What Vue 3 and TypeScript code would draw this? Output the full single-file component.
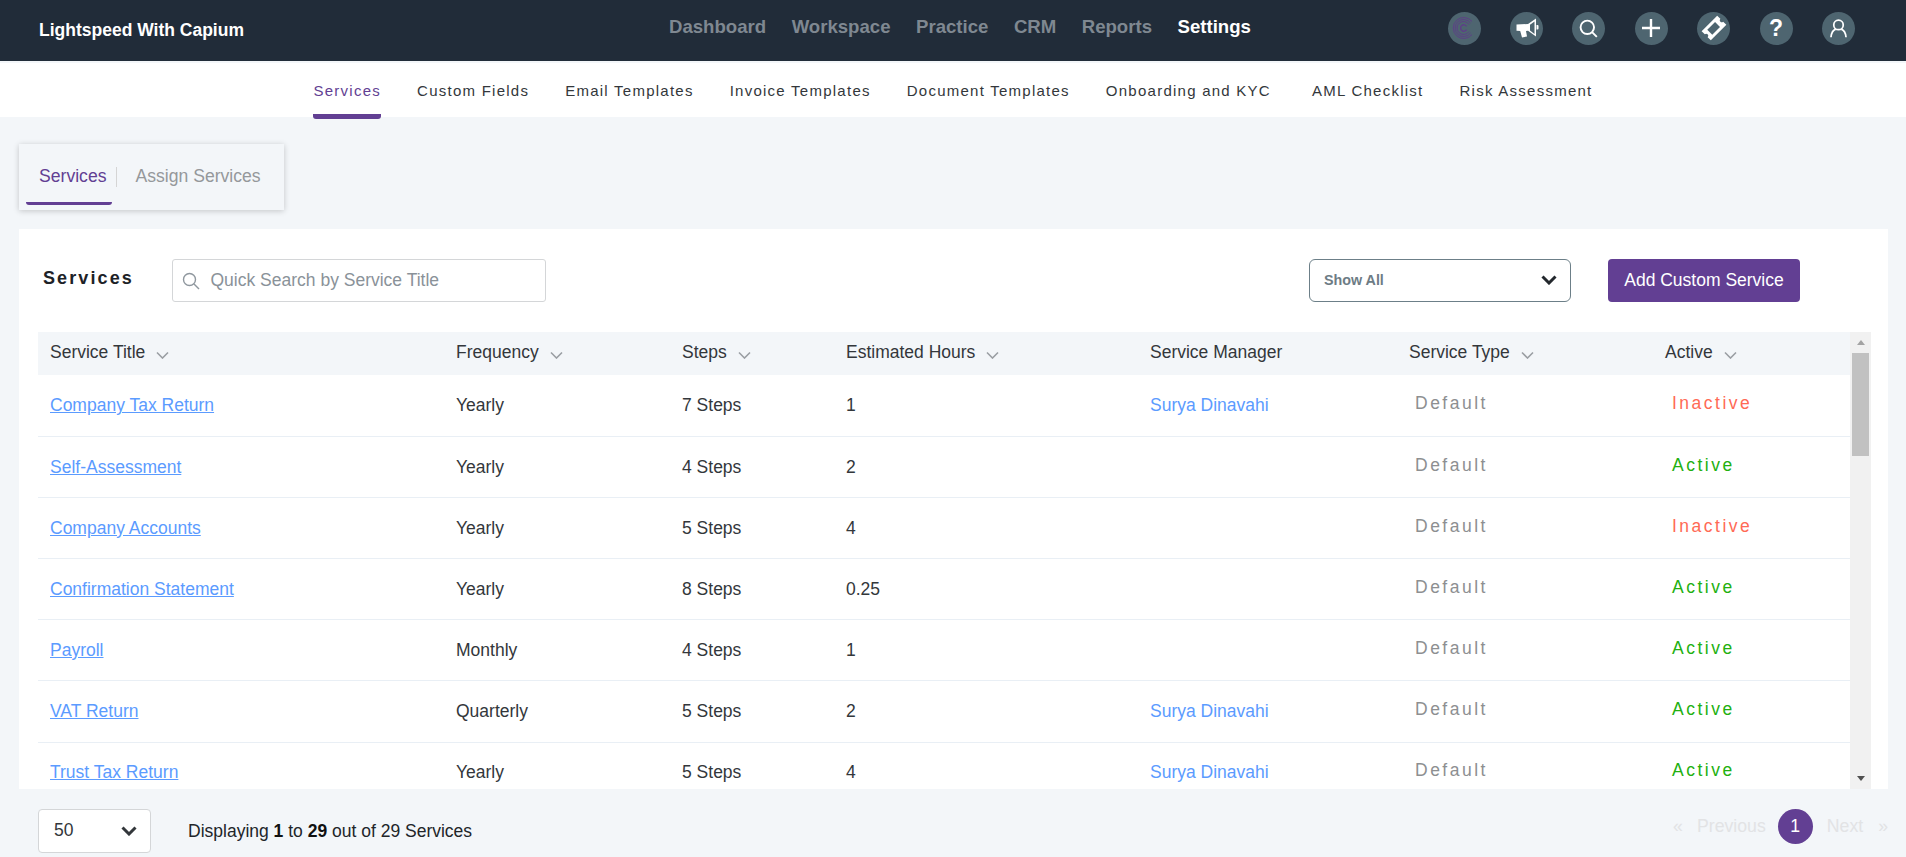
<script setup lang="ts">
interface Row { title: string; freq: string; steps: string; hours: string; manager: string; active: boolean }
const mainNav: string[] = ['Dashboard', 'Workspace', 'Practice', 'CRM', 'Reports', 'Settings']
const subNav: string[] = ['Services', 'Custom Fields', 'Email Templates', 'Invoice Templates', 'Document Templates', 'Onboarding and KYC', 'AML Checklist', 'Risk Assessment']
const cols: { label: string; sort: boolean }[] = [
  { label: 'Service Title', sort: true },
  { label: 'Frequency', sort: true },
  { label: 'Steps', sort: true },
  { label: 'Estimated Hours', sort: true },
  { label: 'Service Manager', sort: false },
  { label: 'Service Type', sort: true },
  { label: 'Active', sort: true },
]
const widths: number[] = [406, 226, 164, 304, 259, 256, 197]
const sd = 'Surya Dinavahi'
const rows: Row[] = [
  { title: 'Company Tax Return', freq: 'Yearly', steps: '7 Steps', hours: '1', manager: sd, active: false },
  { title: 'Self-Assessment', freq: 'Yearly', steps: '4 Steps', hours: '2', manager: '', active: true },
  { title: 'Company Accounts', freq: 'Yearly', steps: '5 Steps', hours: '4', manager: '', active: false },
  { title: 'Confirmation Statement', freq: 'Yearly', steps: '8 Steps', hours: '0.25', manager: '', active: true },
  { title: 'Payroll', freq: 'Monthly', steps: '4 Steps', hours: '1', manager: '', active: true },
  { title: 'VAT Return', freq: 'Quarterly', steps: '5 Steps', hours: '2', manager: sd, active: true },
  { title: 'Trust Tax Return', freq: 'Yearly', steps: '5 Steps', hours: '4', manager: sd, active: true },
]
</script>

<template>
  <div class="page">
    <header class="top">
      <div class="brand">Lightspeed With Capium</div>
      <nav class="main-nav">
        <a v-for="n in mainNav" :key="n" :class="{ on: n === 'Settings' }">{{ n }}</a>
      </nav>
      <div class="icons">
        <span class="ic">
          <svg width="24" height="24" viewBox="0 0 24 24" fill="none" stroke="#5d3f87" stroke-width="1">
            <path d="M20 5.500A10.500 10.500 0 1 0 20 18.500" />
            <path d="M18.500 7A8.500 8.500 0 1 0 18.500 17" />
            <path d="M17 8.500A6.500 6.500 0 1 0 17 15.500" />
            <path d="M14.600 10.400A3.200 3.200 0 1 0 14.600 13.600" stroke-width="1.400" />
          </svg>
        </span>
        <span class="ic">
          <svg width="24" height="24" viewBox="0 0 24 24" fill="#fff">
            <path d="M1.500 8.500L13 8 21 2.500v18L13 14.800l-2 .3 1 5.400-5 1-1.800-6.500-3.700-.3z" />
            <path d="M21.500 9h1a1 1 0 0 1 1 1v2.500a1 1 0 0 1-1 1h-1z" />
            <path d="M15 8.800l4.500-3.200v12.300L15 14.400z" fill="#4e6570" />
          </svg>
        </span>
        <span class="ic">
          <svg width="19" height="19" viewBox="0 0 24 24" fill="none" stroke="#fff" stroke-width="2.400">
            <circle cx="10.500" cy="10.500" r="8.500" />
            <path d="M16.500 16.500l6 6" />
          </svg>
        </span>
        <span class="ic">
          <svg width="24" height="24" viewBox="0 0 24 24" stroke="#fff" stroke-width="2.400">
            <path d="M12 3v18M3 12h18" />
          </svg>
        </span>
        <span class="ic">
          <svg width="26" height="26" viewBox="0 0 26 26">
            <g transform="rotate(-45 13 13)">
              <path fill="#fff" d="M2 6.500h22v4.500a2 2 0 0 0 0 4v4.500H2V15a2 2 0 0 0 0-4z" />
              <rect x="7" y="9.500" width="11" height="7" fill="#4e6570" />
            </g>
          </svg>
        </span>
        <span class="ic qm">?</span>
        <span class="ic">
          <svg width="19" height="19" viewBox="0 0 24 24" fill="none" stroke="#fff" stroke-width="2.200">
            <circle cx="12" cy="7.500" r="6" />
            <path d="M2.500 23c.5-5.500 3-9.300 6-10.300M21.500 23c-.5-5.500-3-9.300-6-10.300" />
          </svg>
        </span>
      </div>
    </header>

    <nav class="sub-nav">
      <a v-for="s in subNav" :key="s" :class="{ on: s === 'Services', aml: s === 'AML Checklist' }">{{ s }}</a>
    </nav>

    <main class="content">
      <div class="tabs">
        <a class="tab on">Services</a>
        <a class="tab">Assign Services</a>
      </div>

      <section class="card">
        <div class="toolbar">
          <h2>Services</h2>
          <div class="search">
            <svg width="18" height="18" viewBox="0 0 18 18" fill="none" stroke="#8f979e" stroke-width="1.400">
              <circle cx="7.500" cy="7.500" r="6" />
              <path d="M12 12l5 5" />
            </svg>
            <span>Quick Search by Service Title</span>
          </div>
          <div class="filter">
            <span>Show All</span>
            <svg width="16" height="10" viewBox="0 0 16 10" fill="none" stroke="#23282d" stroke-width="3">
              <path d="M1.500 1.500L8 8l6.500-6.500" />
            </svg>
          </div>
          <button class="add">Add Custom Service</button>
        </div>

        <div class="table-wrap">
          <div class="table-clip">
            <table>
              <colgroup>
                <col v-for="(w, i) in widths" :key="i" :style="{ width: w + 'px' }" />
              </colgroup>
              <thead>
                <tr>
                  <th v-for="c in cols" :key="c.label">
                    <span class="th-in">{{ c.label }}
                      <svg v-if="c.sort" class="sort" width="13" height="8" viewBox="0 0 13 8" fill="none" stroke="#9a9ea3" stroke-width="1.600">
                        <path d="M1 1.500l5.500 5.500L12 1.500" />
                      </svg>
                    </span>
                  </th>
                </tr>
              </thead>
              <tbody>
                <tr v-for="r in rows" :key="r.title">
                  <td><a class="link">{{ r.title }}</a></td>
                  <td>{{ r.freq }}</td>
                  <td>{{ r.steps }}</td>
                  <td>{{ r.hours }}</td>
                  <td class="mgr">{{ r.manager }}</td>
                  <td><span class="type">Default</span></td>
                  <td><span class="status" :class="r.active ? 'yes' : 'no'">{{ r.active ? 'Active' : 'Inactive' }}</span></td>
                </tr>
              </tbody>
            </table>
          </div>
          <div class="bar">
            <i class="arrow up"></i>
            <div class="thumb"></div>
            <i class="arrow down"></i>
          </div>
        </div>
      </section>

      <footer class="foot">
        <div class="size">
          <span>50</span>
          <svg width="16" height="10" viewBox="0 0 16 10" fill="none" stroke="#33373b" stroke-width="3">
            <path d="M1.500 1.500L8 8l6.500-6.500" />
          </svg>
        </div>
        <div class="count">Displaying <b>1</b> to <b>29</b> out of 29 Services</div>
        <div class="pager">
          <span class="q">«</span>
          <span class="prev">Previous</span>
          <span class="num">1</span>
          <span class="next">Next</span>
          <span class="q">»</span>
        </div>
      </footer>
    </main>
  </div>
</template>

<style>
html, body { margin: 0; height: 100%; overflow: hidden; background: #f3f6f9; }
</style>

<style scoped>
.page { font-family: "Liberation Sans", Arial, sans-serif; color: #33373b; height: 857px; overflow: hidden; }

.top { height: 61px; background: #212c39; display: flex; align-items: center; }
.brand { width: 630px; padding-left: 39px; color: #fff; font-weight: 700; font-size: 17.500px; margin-top: -1px; flex: none; }
.main-nav { display: flex; gap: 25.500px; font-size: 18.600px; font-weight: 700; color: #7f8891; margin-top: -8px; }
.main-nav .on { color: #fff; }
.icons { margin-left: auto; padding-right: 51px; display: flex; gap: 29.400px; margin-top: -5px; }
.ic { width: 33px; height: 33px; border-radius: 50%; background: #4e6570; display: flex; align-items: center; justify-content: center; }
.qm { color: #fff; font-weight: 700; font-size: 23px; }

.sub-nav { margin-top: 2px; height: 54px; background: #fff; display: flex; justify-content: center; gap: 36px; font-size: 15px; letter-spacing: 1.250px; color: #33373b; align-items: center; }
.sub-nav a { position: relative; }
.sub-nav .on { color: #623f93; }
.sub-nav .on::after { content: ""; position: absolute; left: -1px; right: 0; top: 32.500px; height: 5px; background: #623f93; border-radius: 0 0 3px 3px; }
.sub-nav .aml { margin-left: 5px; }

.content { padding: 0 18px 0 19px; }
.tabs { margin-top: 27px; width: 265px; height: 66px; box-sizing: border-box; background: #f3f6f9; box-shadow: 0 1px 6px rgba(0, 0, 0, 0.2); display: flex; align-items: center; font-size: 17.600px; padding: 0 0 1px 20px; color: #95989b; }
.tab { position: relative; }
.tab.on { color: #623f93; padding-right: 11px; margin-right: 18px; }
.tab.on::before { content: ""; position: absolute; right: 0; top: 1px; height: 20px; width: 1px; background: #d5d5d5; }
.tab.on::after { content: ""; position: absolute; left: -13px; right: 5px; top: 36px; height: 3px; background: #623f93; border-radius: 0 0 3px 3px; }

.card { margin-top: 19px; height: 560px; background: #fff; padding: 30px 19px 0; box-sizing: border-box; display: flex; flex-direction: column; overflow: hidden; }
.toolbar { height: 43px; display: flex; align-items: center; flex: none; margin-left: 5px; }
h2 { margin: -4px 0 0; font-size: 18px; font-weight: 700; letter-spacing: 2.100px; color: #1d2227; width: 128.500px; flex: none; }
.search { width: 374px; height: 43px; box-sizing: border-box; border: 1px solid #d4d6d8; border-radius: 3px; display: flex; align-items: center; gap: 11px; padding-left: 9px; font-size: 17.500px; color: #8a9299; }
.filter { margin-left: 763.500px; width: 262px; height: 43px; box-sizing: border-box; border: 1px solid #6c7f88; border-radius: 6px; display: flex; align-items: center; justify-content: space-between; padding: 0 13px 2px 14px; font-size: 14.300px; font-weight: 700; color: #6d7c85; }
.add { margin-left: 37px; width: 192px; height: 43px; border: 0; border-radius: 4px; background: #623f93; color: #fff; font: inherit; font-size: 17.500px; padding: 0; }

.table-wrap { margin-top: 30px; flex: 1; min-height: 0; display: flex; }
.table-clip { width: 1812px; overflow: hidden; flex: none; }
table { border-collapse: collapse; table-layout: fixed; width: 1812px; font-size: 17.500px; }
th { height: 43px; padding: 0 12px; background: #f3f6f9; font-weight: 400; text-align: left; color: #33373b; }
.th-in { position: relative; top: -1px; }
.sort { margin-left: 6px; position: relative; top: 1px; }
td { height: 61.200px; padding: 0.500px 12px 0; box-sizing: border-box; border-bottom: 1px solid #e9eff5; color: #33373b; }
.link { color: #5b9bff; text-decoration: underline; }
.mgr { color: #5b9bff; }
.type { padding-left: 6px; color: #8d8f91; letter-spacing: 2.500px; position: relative; top: -2px; }
.status { padding-left: 7px; letter-spacing: 2.500px; position: relative; top: -2px; }
.status.yes { color: #22b00f; }
.status.no { color: #ff6a55; }

.bar { width: 21px; background: #f1f1f1; flex: none; display: flex; flex-direction: column; align-items: center; }
.thumb { width: 17px; height: 103px; background: #c1c1c1; margin-top: 8px; }
.arrow { width: 0; height: 0; border-left: 4px solid transparent; border-right: 4px solid transparent; }
.arrow.up { border-bottom: 5px solid #a3a3a3; margin-top: 8px; }
.arrow.down { border-top: 5px solid #505050; margin-top: auto; margin-bottom: 8px; }

.foot { margin-top: 20px; padding-left: 19px; display: flex; align-items: center; height: 44px; font-size: 17.500px; }
.size { width: 113px; height: 44px; box-sizing: border-box; border: 1px solid #d4d6d8; border-radius: 4px; background: #fff; display: flex; align-items: center; justify-content: space-between; padding: 0 13px 2px 15px; }
.size svg { position: relative; top: 1px; }
.count { margin-left: 37px; color: #212529; }
.count b { color: #111; }
.pager { margin-left: auto; margin-top: -9px; display: flex; align-items: center; color: #e2e3e5; font-size: 17.700px; }
.prev { margin-left: 14px; }
.num { margin: 0 14px 0 12px; width: 35px; height: 35px; border-radius: 50%; background: #623f93; color: #fff; display: flex; align-items: center; justify-content: center; }
.next + .q { margin-left: 15px; }
</style>
